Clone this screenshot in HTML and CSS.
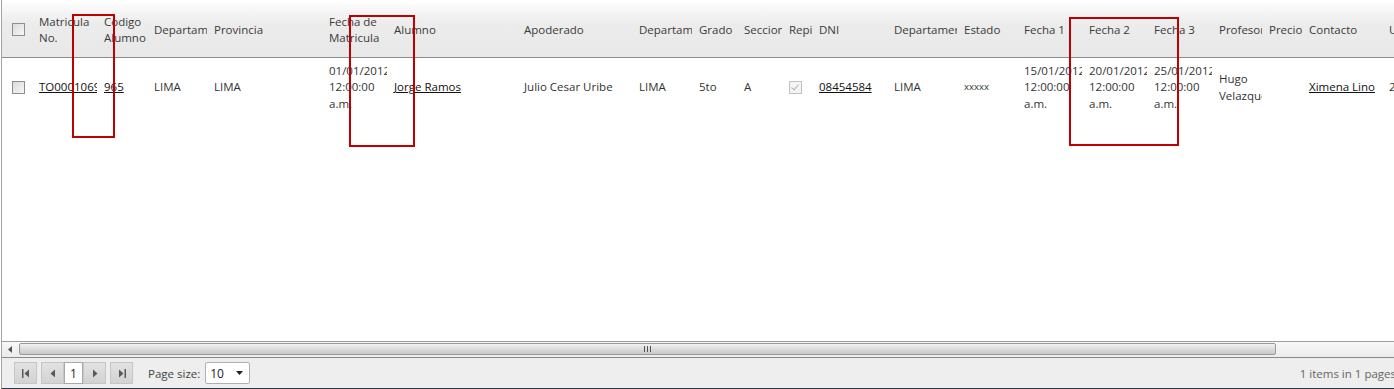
FILE: index.html
```html
<!DOCTYPE html>
<html lang="es">
<head>
    <meta charset="UTF-8">
    <title>Matriculas</title>
    <link rel="stylesheet" href="styles.css">
</head>
<body>
    <div class="grid">
        <div class="grid-body">
            <table class="grid-table">
                <colgroup>
                    <col style="width:33px"><col style="width:65px"><col style="width:50px"><col style="width:60px">
                    <col style="width:115px"><col style="width:65px"><col style="width:130px"><col style="width:115px">
                    <col style="width:60px"><col style="width:45px"><col style="width:45px"><col style="width:30px">
                    <col style="width:75px"><col style="width:70px"><col style="width:60px"><col style="width:65px">
                    <col style="width:65px"><col style="width:65px"><col style="width:50px"><col style="width:40px">
                    <col style="width:80px"><col style="width:100px">
                </colgroup>
                <thead>
                    <tr>
                        <th class="check-cell"><span class="check"></span></th>
                        <th>Matricula No.</th>
                        <th>Codigo Alumno</th>
                        <th>Departamento</th>
                        <th>Provincia</th>
                        <th>Fecha de Matricula</th>
                        <th>Alumno</th>
                        <th>Apoderado</th>
                        <th>Departamento</th>
                        <th>Grado</th>
                        <th>Seccion</th>
                        <th>Repitente</th>
                        <th>DNI</th>
                        <th>Departamento</th>
                        <th>Estado</th>
                        <th>Fecha 1</th>
                        <th>Fecha 2</th>
                        <th>Fecha 3</th>
                        <th>Profesor</th>
                        <th>Precio</th>
                        <th>Contacto</th>
                        <th>Usuario</th>
                    </tr>
                </thead>
                <tbody>
                    <tr>
                        <td class="check-cell"><span class="check"></span></td>
                        <td><a href="#">TO0001069</a></td>
                        <td><a href="#">965</a></td>
                        <td>LIMA</td>
                        <td>LIMA</td>
                        <td>01/01/2012 12:00:00 a.m.</td>
                        <td><a href="#">Jorge Ramos</a></td>
                        <td>Julio Cesar Uribe</td>
                        <td>LIMA</td>
                        <td>5to</td>
                        <td>A</td>
                        <td><span class="check checked"></span></td>
                        <td><a href="#">08454584</a></td>
                        <td>LIMA</td>
                        <td class="small">xxxxx</td>
                        <td>15/01/2012 12:00:00 a.m.</td>
                        <td>20/01/2012 12:00:00 a.m.</td>
                        <td>25/01/2012 12:00:00 a.m.</td>
                        <td>Hugo Velazquez</td>
                        <td></td>
                        <td><a href="#">Ximena Lino</a></td>
                        <td>2</td>
                    </tr>
                </tbody>
            </table>
        </div>

        <!-- barra de desplazamiento -->
        <div class="hscroll">
            <span class="scroll-btn">
                <svg width="5" height="7" viewBox="0 0 5 7"><path d="M4 0 L0 3.5 L4 7 Z" fill="#555"/></svg>
            </span>
            <div class="scroll-track">
                <div class="scroll-thumb"><span class="grip"></span></div>
            </div>
        </div>

        <!-- paginador -->
        <div class="pager">
            <span class="pager-btn first">
                <svg width="8" height="9" viewBox="0 0 8 9"><rect x="0" y="0" width="1.5" height="9" fill="#5a5a5a"/><path d="M7 0.5 L2.5 4.5 L7 8.5 Z" fill="#5a5a5a"/></svg>
            </span>
            <span class="pager-btn prev">
                <svg width="6" height="9" viewBox="0 0 6 9"><path d="M5 0.5 L0.5 4.5 L5 8.5 Z" fill="#5a5a5a"/></svg>
            </span>
            <span class="page-input">1</span>
            <span class="pager-btn next">
                <svg width="6" height="9" viewBox="0 0 6 9"><path d="M1 0.5 L5.5 4.5 L1 8.5 Z" fill="#5a5a5a"/></svg>
            </span>
            <span class="pager-btn last">
                <svg width="8" height="9" viewBox="0 0 8 9"><path d="M1 0.5 L5.5 4.5 L1 8.5 Z" fill="#5a5a5a"/><rect x="6.5" y="0" width="1.5" height="9" fill="#5a5a5a"/></svg>
            </span>
            <span class="page-size-label">Page size:</span>
            <span class="page-size">
                <span>10</span>
                <svg width="7" height="4" viewBox="0 0 7 4"><path d="M0 0 L7 0 L3.5 4 Z" fill="#222"/></svg>
            </span>
            <span class="pager-info">1 items in 1 pages</span>
        </div>

        <!-- marcas rojas -->
        <span class="mark mark-codigo"></span>
        <span class="mark mark-alumno"></span>
        <span class="mark mark-fechas"></span>
    </div>
</body>
</html>
```

FILE: styles.css
```css
body {
    margin: 0;
    font-family: 'Open Sans', 'Noto Sans', sans-serif;
    font-size: 11.5px;
    color: #333;
    background: #fff;
}
.grid {
    position: relative;
    height: 388px;
    margin-left: 1px;
    border-left: 1px solid #a3a3a3;
    border-bottom: 1px solid #2d3a48;
    display: flex;
    flex-direction: column;
    overflow: hidden;
}
.grid-body {
    flex: 1;
    overflow: hidden;
    background: #fff;
}
.grid-table {
    table-layout: fixed;
    width: 1483px;
    border-collapse: separate;
    border-spacing: 0;
}
/* el borde transparente deja el recorte del texto antes del final de la celda */
.grid-table th,
.grid-table td {
    padding: 0 0 0 4px;
    border-right: 3px solid transparent;
    text-align: left;
    font-weight: normal;
    overflow: hidden;
    vertical-align: middle;
    line-height: 16.5px;
}
.grid-table th {
    height: 58px;
    box-sizing: border-box;
    padding-top: 2px;
    background:
        linear-gradient(#8c8c8c, #8c8c8c) left bottom / 100% 1px no-repeat,
        linear-gradient(#ffffff 0, #ececec 40%, #e8e8e8 100%);
    background-origin: border-box;
    color: #3a3a3a;
}
.grid-table td {
    height: 57px;
    box-sizing: border-box;
    padding-top: 2px;
    color: #333;
}
.grid-table a {
    color: #111;
    text-decoration: underline;
}
.grid-table td.small {
    font-size: 9.5px;
}
.grid-table .check-cell {
    padding-left: 10px;
}
.check {
    display: inline-block;
    width: 11px;
    height: 11px;
    border: 1px solid #8e8e8e;
    background: linear-gradient(135deg, #dcdcdc, #f6f6f6);
    vertical-align: middle;
    position: relative;
    top: -1px;
}
.check.checked {
    border-color: #c2c2c2;
    background: #f4f4f4;
}
.check.checked::after {
    content: "";
    position: absolute;
    left: 3px;
    top: 1px;
    width: 3px;
    height: 6px;
    border: solid #b0b0b0;
    border-width: 0 1px 1px 0;
    transform: rotate(40deg);
}
.hscroll {
    height: 15px;
    border-top: 1px solid #9e9e9e;
    display: flex;
    background: linear-gradient(#f7f7f7, #ececec);
}
.scroll-btn {
    width: 17px;
    display: flex;
    align-items: center;
    justify-content: center;
}
.scroll-track {
    flex: 1;
    padding: 1px 0;
}
.scroll-thumb {
    width: 1257px;
    height: 12px;
    box-sizing: border-box;
    border: 1px solid #9a9a9a;
    border-radius: 2px;
    background: linear-gradient(#f2f2f2, #dcdcdc 50%, #c9c9c9);
    display: flex;
    align-items: center;
    justify-content: center;
}
.grip {
    width: 7px;
    height: 6px;
    background: repeating-linear-gradient(90deg, #555 0 1px, transparent 1px 3px);
}
.pager {
    height: 30px;
    border-top: 1px solid #8a8a8a;
    background: #eeeeee;
    display: flex;
    align-items: center;
    padding-left: 12px;
    color: #444;
}
.pager-btn {
    width: 21px;
    height: 20px;
    border: 1px solid #c6c6c6;
    background: linear-gradient(#e2e2e2, #d2d2d2);
    display: inline-flex;
    align-items: center;
    justify-content: center;
}
.pager-btn.prev,
.pager-btn.last {
    margin-left: 4px;
}
.page-input {
    width: 17px;
    height: 20px;
    border: 1px solid #a8a8a8;
    background: #fff;
    display: inline-flex;
    align-items: center;
    justify-content: center;
    color: #222;
    font-size: 12px;
}
.page-size-label {
    margin-left: 15px;
    margin-right: 5px;
}
.page-size {
    width: 45px;
    height: 22px;
    border: 1px solid #b0b0b0;
    border-radius: 2px;
    background: #fff;
    display: inline-flex;
    align-items: center;
    justify-content: space-between;
    padding: 0 6px 0 4px;
    box-sizing: border-box;
    color: #222;
    font-size: 12px;
}
.pager-info {
    margin-left: auto;
    margin-right: -2px;
    color: #666;
    white-space: nowrap;
}
.mark {
    position: absolute;
    border: 2px solid #c00000;
    pointer-events: none;
}
.mark-codigo {
    left: 70px;
    top: 14px;
    width: 39px;
    height: 120px;
}
.mark-alumno {
    left: 347px;
    top: 15px;
    width: 62px;
    height: 128px;
}
.mark-fechas {
    left: 1067px;
    top: 17px;
    width: 106px;
    height: 125px;
}
```
